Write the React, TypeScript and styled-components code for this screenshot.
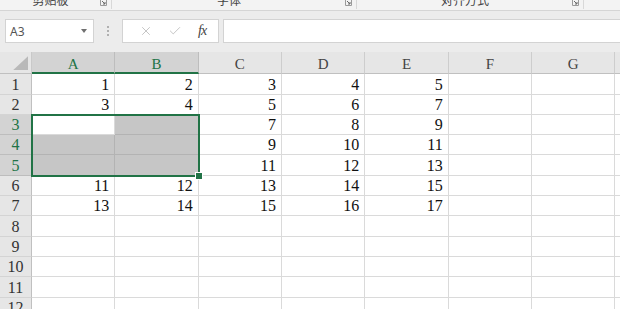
import React from 'react';
import styled, {createGlobalStyle} from 'styled-components';
import {X, Check} from 'lucide-react';

const GREEN = '#217346';
const COL_W = 83.33;
const ROW_H = 20.3;
const HEAD_H = 22.3;

const GlobalStyle = createGlobalStyle`
  html, body {
    margin: 0;
    padding: 0;
    background: #ffffff;
    overflow: hidden;
  }
  body {
    width: 620px;
    height: 309px;
  }
`

const data: (number | null)[][] = [
    [1, 2, 3, 4, 5],
    [3, 4, 5, 6, 7],
    [null, null, 7, 8, 9],
    [null, null, 9, 10, 11],
    [null, null, 11, 12, 13],
    [11, 12, 13, 14, 15],
    [13, 14, 15, 16, 17],
    [], [], [], [], [],
]
const columns = ['A', 'B', 'C', 'D', 'E', 'F', 'G', 'H']
const groups = [
    {label: '剪贴板', width: 112},
    {label: '字体', width: 245},
    {label: '对齐方式', width: 227},
]

const isSelCol = (c: number) => c < 2
const isSelRow = (r: number) => r >= 2 && r <= 4

export default function App() {
    return (
        <Page>
            <GlobalStyle/>
            <Ribbon>
                {groups.map(g => (
                    <Group key={g.label} style={{width: g.width}}>
                        <GroupLabel>{g.label}</GroupLabel>
                        <Launcher>
                            <svg width="7" height="7" viewBox="0 0 7 7">
                                <path d="M0.5 0.5 H6.5 V6.5 H0.5 Z" fill="none" stroke="#9a9a9a" strokeWidth="1"/>
                                <path d="M2 2 L5 5 M5 3 V5 H3" fill="none" stroke="#6a6a6a" strokeWidth="1"/>
                            </svg>
                        </Launcher>
                    </Group>
                ))}
            </Ribbon>
            <FormulaBar>
                <NameBox>
                    <span>A3</span>
                    <Caret/>
                </NameBox>
                <Dots>
                    <i/><i/><i/>
                </Dots>
                <ButtonBox>
                    <X size={14} color="#b8b8b8" strokeWidth={1.4}/>
                    <Check size={14} color="#b8b8b8" strokeWidth={1.4}/>
                    <Fx>fx</Fx>
                </ButtonBox>
                <FormulaInput/>
            </FormulaBar>
            <SheetWrap>
                <Sheet>
                    <Corner/>
                    {columns.map((c, i) => (
                        <ColHead key={c} $sel={isSelCol(i)}>{c}</ColHead>
                    ))}
                    {data.map((row, r) => (
                        <React.Fragment key={r}>
                            <RowHead $sel={isSelRow(r)}>{r + 1}</RowHead>
                            {columns.map((c, ci) => {
                                const inSel = isSelRow(r) && isSelCol(ci)
                                const active = r === 2 && ci === 0
                                return (
                                    <Cell key={c} $fill={inSel && !active}>
                                        {row[ci] ?? ''}
                                    </Cell>
                                )
                            })}
                        </React.Fragment>
                    ))}
                </Sheet>
                <Selection>
                    <FillHandle/>
                </Selection>
            </SheetWrap>
        </Page>
    )
}

const Page = styled.div`
  width: 620px;
  height: 309px;
  overflow: hidden;
  background: #ffffff;
`
const Ribbon = styled.div`
  display: flex;
  height: 10px;
  background: #f3f3f3;
  border-bottom: 1px solid #d5d5d5;
  overflow: hidden;
`
const Group = styled.div`
  display: flex;
  align-items: flex-start;
  border-right: 1px solid #d8d8d8;
  height: 9px;
  box-sizing: border-box;
`
const GroupLabel = styled.div`
  flex: 1;
  text-align: center;
  margin-top: -8px;
  font-family: "Noto Sans CJK SC", sans-serif;
  font-size: 12px;
  line-height: 15px;
  color: #444444;
  padding-left: 6px;
`
const Launcher = styled.div`
  width: 16px;
  display: flex;
  justify-content: center;
  margin-top: -1px;
`
const FormulaBar = styled.div`
  display: flex;
  align-items: center;
  height: 41px;
  background: #ececec;
  padding: 0 0 1px 5px;
  box-sizing: border-box;
`
const Box = styled.div`
  height: 24px;
  background: #ffffff;
  border: 1px solid #d3d3d3;
  box-sizing: border-box;
  display: flex;
  align-items: center;
`
const NameBox = styled(Box)`
  width: 89px;
  padding: 0 6px 0 4px;
  justify-content: space-between;
  font-family: "Noto Sans", "Liberation Sans", sans-serif;
  font-size: 12px;
  color: #555555;
`
const Caret = styled.div`
  width: 0;
  height: 0;
  border-left: 3.5px solid transparent;
  border-right: 3.5px solid transparent;
  border-top: 4px solid #707070;
`
const Dots = styled.div`
  width: 28px;
  display: flex;
  flex-direction: column;
  align-items: center;
  gap: 2px;

  i {
    width: 2px;
    height: 2px;
    background: #b0b0b0;
  }
`
const ButtonBox = styled(Box)`
  width: 97px;
  justify-content: space-around;
  padding: 0 4px 0 8px;
`
const Fx = styled.span`
  font-family: "Liberation Serif", serif;
  font-style: italic;
  font-size: 14px;
  color: #444444;
  letter-spacing: -1px;
`
const FormulaInput = styled(Box)`
  flex: 1;
  margin-left: 4px;
  border-right: none;
`
const SheetWrap = styled.div`
  position: relative;
`
const Sheet = styled.div`
  display: grid;
  grid-template-columns: 32px repeat(8, ${COL_W}px);
  grid-template-rows: ${HEAD_H}px repeat(12, ${ROW_H}px);
  font-family: "Liberation Serif", "Noto Sans CJK SC", serif;
`
const Corner = styled.div`
  background: #e6e6e6;
  border-right: 1px solid #c9c9c9;
  border-bottom: 1px solid #c0c0c0;
  box-sizing: border-box;
  display: flex;
  justify-content: flex-end;
  align-items: flex-end;
  padding: 0 3px 3px 0;

  &::after {
    content: '';
    width: 15px;
    height: 14px;
    background: #b9b9b9;
    clip-path: polygon(100% 0, 100% 100%, 0 100%);
  }
`
const ColHead = styled.div<{$sel: boolean}>`
  background: ${p => p.$sel ? '#d3d3d3' : '#e6e6e6'};
  color: ${p => p.$sel ? GREEN : '#444444'};
  border-right: 1px solid ${p => p.$sel ? '#bdbdbd' : '#cdcdcd'};
  border-bottom: ${p => p.$sel ? `2px solid ${GREEN}` : '1px solid #c0c0c0'};
  box-sizing: border-box;
  display: flex;
  align-items: center;
  justify-content: center;
  font-size: 15px;
  padding-top: 4px;
`
const RowHead = styled.div<{$sel: boolean}>`
  background: ${p => p.$sel ? '#d3d3d3' : '#e6e6e6'};
  color: ${p => p.$sel ? GREEN : '#333333'};
  border-right: 1px solid #c0c0c0;
  border-bottom: 1px solid ${p => p.$sel ? '#bdbdbd' : '#d4d4d4'};
  box-sizing: border-box;
  display: flex;
  align-items: flex-end;
  justify-content: center;
  font-size: 16px;
  line-height: 18px;
`
const Cell = styled.div<{$fill: boolean}>`
  background: ${p => p.$fill ? '#c6c6c6' : '#ffffff'};
  border-right: 1px solid ${p => p.$fill ? '#b3b3b3' : '#dadada'};
  border-bottom: 1px solid ${p => p.$fill ? '#b3b3b3' : '#dadada'};
  box-sizing: border-box;
  display: flex;
  align-items: flex-end;
  justify-content: flex-end;
  padding-right: 5px;
  font-size: 16px;
  line-height: 18px;
  color: #111111;
`
const Selection = styled.div`
  position: absolute;
  left: 31px;
  top: ${HEAD_H + 2 * ROW_H - 1.2}px;
  width: ${2 * COL_W + 2}px;
  height: ${3 * ROW_H + 2}px;
  border: 2px solid ${GREEN};
  box-sizing: border-box;
  pointer-events: none;
`
const FillHandle = styled.div`
  position: absolute;
  right: -5px;
  bottom: -5px;
  width: 6px;
  height: 6px;
  background: ${GREEN};
  border: 1px solid #ffffff;
`
